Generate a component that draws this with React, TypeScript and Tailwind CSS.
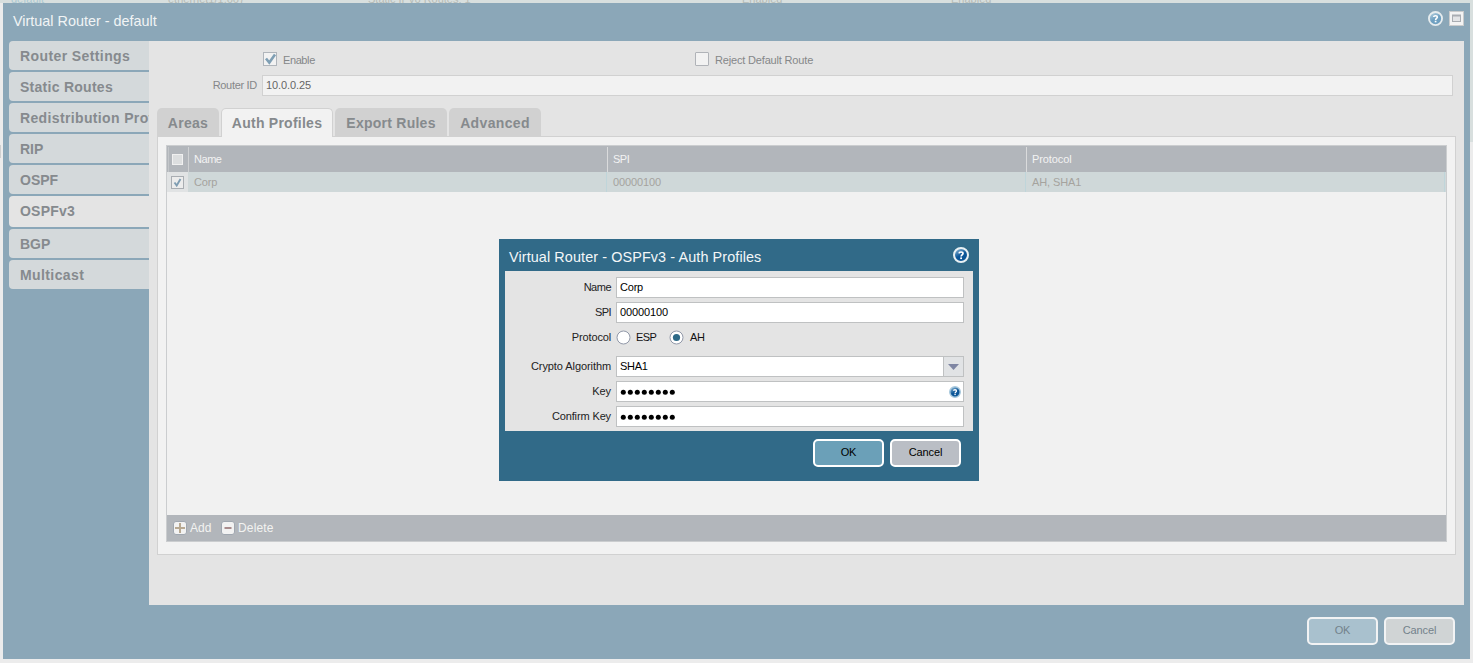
import React from "react";

const F = "font-['Liberation_Sans',Arial,sans-serif]";

function HelpIcon({ size, ring, a, b }: { size: number; ring: string; a: string; b: string }) {
  const id = "g" + size + a.slice(1);
  return (
    <svg width={size} height={size} viewBox="0 0 16 16" className="block shrink-0">
      <defs>
        <linearGradient id={id} x1="0.1" y1="0" x2="0.7" y2="1">
          <stop offset="0" stopColor={b} />
          <stop offset="0.55" stopColor={a} />
          <stop offset="1" stopColor={a} />
        </linearGradient>
      </defs>
      <circle cx="8" cy="8" r="7" fill={"url(#" + id + ")"} stroke={ring} strokeWidth="2" />
      <path d="M6 6.4C6.2 4.5 10 4.5 10 6.5C10 7.9 8.1 8 8.1 9.6" fill="none" stroke="#fff" strokeWidth="1.7" />
      <rect x="7.2" y="10.4" width="1.8" height="1.7" fill="#fff" />
    </svg>
  );
}

const SIDE = [
  { label: "Router Settings", cls: "h-[29px] bg-[#d4d9db] tracking-[0.4px]" },
  { label: "Static Routes", cls: "h-[29px] bg-[#d4d9db] tracking-[0.27px]" },
  { label: "Redistribution Profile", cls: "h-[29px] bg-[#d4d9db] tracking-[0.36px]" },
  { label: "RIP", cls: "h-[29px] bg-[#d4d9db]" },
  { label: "OSPF", cls: "h-[29px] bg-[#d4d9db]" },
  { label: "OSPFv3", cls: "h-[31px] bg-[#e4e4e4] pb-[2px] tracking-[0.2px]" },
  { label: "BGP", cls: "h-[29px] bg-[#d4d9db]" },
  { label: "Multicast", cls: "h-[29px] bg-[#d4d9db] tracking-[0.4px]" },
];

function Sidebar() {
  return (
    <nav className="flex w-[140px] shrink-0 flex-col gap-[2px] overflow-hidden">
      {SIDE.map((s) => (
        <div
          key={s.label}
          className={"flex shrink-0 items-center overflow-hidden rounded-l-[4px] pl-[11px] pt-px text-[14px] font-bold whitespace-nowrap text-[#868a8e] " + s.cls}
        >
          {s.label}
        </div>
      ))}
    </nav>
  );
}

function Tabs() {
  const base = "flex items-center justify-center rounded-t-[5px] text-[14px] font-bold whitespace-nowrap text-[#868a8d] ";
  return (
    <div className="relative z-10 flex h-[29px] gap-[2px]">
      <div className={base + "h-[28px] w-[62px] bg-[#d1d1d1] pt-[2px] tracking-[0.3px]"}>Areas</div>
      <div className={base + "h-[29px] w-[112px] border border-b-0 border-[#d1d1d1] bg-[#f2f2f2] tracking-[0.25px]"}>Auth Profiles</div>
      <div className={base + "h-[28px] w-[112px] bg-[#d1d1d1] pt-[2px] tracking-[0.25px]"}>Export Rules</div>
      <div className={base + "h-[28px] w-[92px] bg-[#d1d1d1] pt-[2px] tracking-[0.35px]"}>Advanced</div>
    </div>
  );
}

function Grid() {
  return (
    <div className="flex h-[397px] flex-col border border-[#cbcdcf] bg-[#f1f1f1] text-[11px]">
      <div className="flex h-[26px] shrink-0 items-stretch bg-[#b2b6bb] text-[#f2f3f3]">
        <div className="mt-px ml-px flex w-[21px] justify-center border-x border-[#cfd1d3] border-l-[#c3c6c9] pt-[7px]">
          <div className="mr-[2px] h-[11px] w-[11px] border border-[#f0f0f0] bg-[#dcdedf]" />
        </div>
        <div className="mt-px flex w-[419px] items-center border-r border-[#dadbdc] pl-[5px] tracking-[-0.45px]">Name</div>
        <div className="mt-px flex w-[419px] items-center border-r border-[#dadbdc] pl-[5px] tracking-[-0.5px]">SPI</div>
        <div className="mt-px flex items-center pl-[5px] tracking-[-0.1px]">Protocol</div>
      </div>
      <div className="flex h-[20px] shrink-0 items-stretch bg-[#cfd8d9] text-[#a5a39e]">
        <div className="flex w-[21px] items-center justify-center bg-[#e1e3e4]">
          <div className="mt-px flex h-[13px] w-[13px] items-center justify-center border border-[#a9adb2] bg-[#ececec]">
            <svg width="9" height="9" viewBox="0 0 9 9">
              <path d="M1.5 4.5L3.7 7.5L7.5 1" fill="none" stroke="#7f9db2" strokeWidth="1.9" />
            </svg>
          </div>
        </div>
        <div className="flex w-[419px] items-center border-r border-[#bfd5da] pl-[6px] tracking-[-0.15px]">Corp</div>
        <div className="flex w-[419px] items-center border-r border-[#bfd5da] pl-[6px] tracking-[-0.1px]">00000100</div>
        <div className="mr-px flex flex-1 items-center border-r border-[#bfd5da] pl-[6px] tracking-[-0.1px]">AH, SHA1</div>
      </div>
      <div className="flex-1" />
      <div className="flex h-[26px] shrink-0 items-center bg-[#b2b6bb] pl-[6px] text-[12px] text-[#f2f3f1]">
        <svg width="14" height="14" viewBox="0 0 14 14">
          <rect x="0.5" y="0.5" width="13" height="13" rx="2.5" fill="#f2f2f2" stroke="#a0a7b0" />
          <path d="M7 2V12M2 7H12" stroke="#b8a992" strokeWidth="2" />
        </svg>
        <span className="ml-[3px] w-[31px]">Add</span>
        <svg width="14" height="14" viewBox="0 0 14 14">
          <rect x="0.5" y="0.5" width="13" height="13" rx="2.5" fill="#f2f2f2" stroke="#a0a7b0" />
          <path d="M3.5 7H10.5" stroke="#a98c8d" strokeWidth="2" />
        </svg>
        <span className="ml-[3px] tracking-[0.15px]">Delete</span>
      </div>
    </div>
  );
}

function Field({ label, mt, lt, children }: { label: string; mt: string; lt: string; children: React.ReactNode }) {
  return (
    <div className={"flex h-[21px] shrink-0 items-center " + mt}>
      <div className={"w-[106px] text-right whitespace-nowrap text-[#222] " + lt}>{label}</div>
      <div className="ml-[5px] flex h-[21px] w-[348px] items-center">{children}</div>
    </div>
  );
}

const BOX = "flex h-[21px] w-[348px] items-center border border-[#bfc1c2] bg-white pl-[3px] text-black ";

function Dots() {
  return (
    <svg width="56" height="7" viewBox="0 0 56 7" className="mt-px">
      {[0, 1, 2, 3, 4, 5, 6, 7].map((i) => (
        <circle key={i} cx={3.3 + i * 7} cy="3.3" r="2.5" fill="#000" />
      ))}
    </svg>
  );
}

function Dialog() {
  return (
    <div className="absolute top-[239px] left-[499px] flex h-[242px] w-[480px] flex-col bg-[#316a88] px-[6px] text-[11px]">
      <div className="flex h-[32px] shrink-0 items-center justify-between pr-[4px] pl-[4px] text-[#f4f7f8]">
        <span className="mt-[5px] text-[14.4px] tracking-[0.1px]">Virtual Router - OSPFv3 - Auth Profiles</span>
        <HelpIcon size={16} ring="#e9f0f3" a="#0b5597" b="#9cc4de" />
      </div>
      <div className="flex h-[160px] shrink-0 flex-col bg-[#e4e4e4]">
        <Field label="Name" mt="mt-[6px]" lt="tracking-[-0.5px]"><div className={BOX + "tracking-[-0.2px]"}>Corp</div></Field>
        <Field label="SPI" mt="mt-[4px]" lt="tracking-[-0.6px]"><div className={BOX + "tracking-[-0.1px]"}>00000100</div></Field>
        <Field label="Protocol" mt="mt-[4px]" lt="tracking-[-0.15px]">
          <svg width="15" height="15" viewBox="0 0 15 15"><circle cx="7.5" cy="7.5" r="6.5" fill="#fff" stroke="#9299a9" /></svg>
          <span className="ml-[5px] w-[33px] text-[#111] tracking-[-0.6px]">ESP</span>
          <svg width="15" height="15" viewBox="0 0 15 15"><circle cx="7.5" cy="7.5" r="6.5" fill="#fff" stroke="#9299a9" /><circle cx="7.5" cy="7.5" r="3.6" fill="#2d6987" /></svg>
          <span className="ml-[6px] text-[#111] tracking-[-0.4px]">AH</span>
        </Field>
        <Field label="Crypto Algorithm" mt="mt-[8px]" lt="tracking-[-0.08px]">
          <div className={BOX + "justify-between"}>
            <span className="tracking-[-0.3px]">SHA1</span>
            <div className="flex h-[19px] w-[20px] items-center justify-center border-l border-[#bfc1c2] bg-[#e1e3e5]">
              <svg width="11" height="6" viewBox="0 0 11 6" className="mt-px"><path d="M0 0H11L5.5 6Z" fill="#7f86a3" /></svg>
            </div>
          </div>
        </Field>
        <Field label="Key" mt="mt-[4px]" lt="tracking-[-0.1px]">
          <div className={BOX + "justify-between pr-[2px]"}><Dots /><HelpIcon size={12} ring="#a9c9dd" a="#0b5597" b="#9cc4de" /></div>
        </Field>
        <Field label="Confirm Key" mt="mt-[4px]" lt="tracking-[-0.13px]"><div className={BOX}><Dots /></div></Field>
      </div>
      <div className="flex gap-[6px] pt-[8px] pl-[308px]">
        <button className="h-[28px] w-[71px] rounded-[5px] border-2 border-white bg-[#6ba0b8] pb-[2px] text-black tracking-[-0.2px]">OK</button>
        <button className="h-[28px] w-[71px] rounded-[5px] border-2 border-white bg-[#babec5] pb-[2px] text-black tracking-[-0.1px]">Cancel</button>
      </div>
    </div>
  );
}

export default function App() {
  return (
    <div className={"relative flex h-[663px] w-[1473px] flex-col overflow-hidden bg-[#ececec] " + F}>
      <div className="relative flex h-[3px] shrink-0 overflow-hidden bg-[#d8dfde] text-[11px] leading-[11px] text-[#b5bbb6]">
        <div className="-mt-[6px] w-[150px] pl-[11px] text-[#a9c8d2]">default</div>
        <div className="-mt-[6px] w-[202px] pl-[18px]">ethernet1/1.667</div>
        <div className="-mt-[6px] w-[374px] pl-[16px]">Static IPv6 Routes: 1</div>
        <div className="-mt-[6px] w-[209px] pl-[16px]">Enabled</div>
        <div className="-mt-[6px] pl-[16px]">Enabled</div>
      </div>
      <div className="flex h-[656px] shrink-0">
        <div className="flex w-[3px] shrink-0 flex-col">
          <div className="mt-[142px] h-[13px] w-px bg-[#cfcfcf]" />
        </div>
        <div className="flex h-[656px] w-[1467px] shrink-0 flex-col bg-[#8ba7b8]">
          <div className="flex h-[38px] shrink-0 items-center justify-between pr-[6px] pl-[10px] text-[#f1f4f5]">
            <span className="text-[14.4px]">Virtual Router - default</span>
            <div className="-mt-[7px] flex gap-[6px]">
              <HelpIcon size={15} ring="#e6ecee" a="#6fa0c1" b="#c0d7e4" />
              <svg width="15" height="15" viewBox="0 0 15 15">
                <rect x="0.5" y="0.5" width="14" height="14" fill="#f3f3f3" stroke="#c9cbcc" />
                <rect x="3.5" y="4.5" width="8" height="6" fill="#e3e4e6" stroke="#a9adb2" />
                <path d="M3 4.5H12" stroke="#a9adb2" strokeWidth="2" />
              </svg>
            </div>
          </div>
          <div className="flex h-[564px] shrink-0 pl-[6px]">
            <Sidebar />
            <main className="flex w-[1315px] flex-col bg-[#e4e4e4] px-[8px] text-[11px] text-[#858789]">
              <div className="flex h-[34px] shrink-0 items-center pt-[4px] pl-[106px]">
                <svg width="14" height="14" viewBox="0 0 14 14" className="mb-[3px]">
                  <rect x="0.5" y="0.5" width="13" height="13" fill="#f2f2f2" stroke="#b0b5bb" />
                  <path d="M3 6.5L6.3 10.5L12 2.5" fill="none" stroke="#7f9fb4" strokeWidth="2.6" />
                </svg>
                <span className="ml-[6px] w-[412px] tracking-[-0.4px]">Enable</span>
                <div className="mb-[3px] h-[14px] w-[14px] rounded-[1px] border border-[#b0b3b8] bg-[#f2f2f2]" />
                <span className="ml-[6px] tracking-[-0.17px]">Reject Default Route</span>
              </div>
              <div className="flex h-[21px] shrink-0 items-center">
                <span className="w-[100px] text-right tracking-[-0.3px]">Router ID</span>
                <div className="ml-[5px] flex h-[21px] w-[1191px] items-center border border-[#d1d1d1] bg-[#f2f2f2] pl-[3px] text-[#666] tracking-[-0.1px]">10.0.0.25</div>
              </div>
              <div className="mt-[12px]"><Tabs /></div>
              <div className="-mt-px h-[419px] w-[1299px] shrink-0 border border-[#d1d1d1] bg-[#f2f2f2] p-[8px]">
                <Grid />
              </div>
            </main>
          </div>
          <div className="flex justify-end gap-[6px] pt-[12px] pr-[15px] text-[11px] text-[#73828b]">
            <button className="h-[28px] w-[71px] rounded-[5px] border-2 border-[#f2f3f4] bg-[#a9c1ce] pb-[2px] tracking-[-0.2px]">OK</button>
            <button className="h-[28px] w-[71px] rounded-[5px] border-2 border-[#f2f3f4] bg-[#d0d4d5] pb-[2px] tracking-[-0.1px]">Cancel</button>
          </div>
        </div>
        <div className="h-[139px] w-[3px] shrink-0 bg-[#d8dfde]" />
      </div>
      <Dialog />
    </div>
  );
}
